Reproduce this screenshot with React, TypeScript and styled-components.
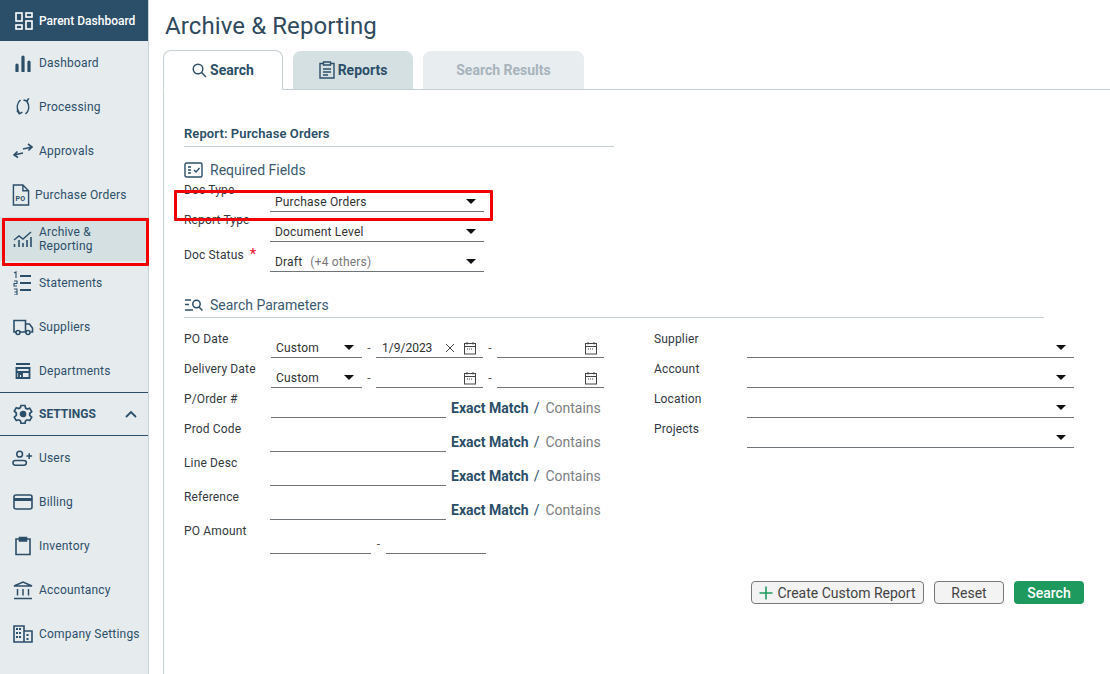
import React from "react"
import styled, { createGlobalStyle } from "styled-components"

const NAVY = "#2c4f69"

const GlobalStyle = createGlobalStyle`
  html, body { margin: 0; padding: 0; background: #fff; }
  body { font-family: Roboto, "Liberation Sans", sans-serif; color: ${NAVY}; overflow: hidden; }
`

const Page = styled.div`
  display: flex;
  width: 1110px;
  height: 674px;
  overflow: hidden;
`

const Sidebar = styled.nav`
  position: relative;
  flex: 0 0 148px;
  box-sizing: content-box;
  background: #e6ebee;
  border-right: 1px solid #c9d2d6;
`

const ParentItem = styled.div`
  display: flex;
  align-items: center;
  height: 41px;
  padding-left: 13px;
  gap: 5px;
  background: ${NAVY};
  color: #fff;
  font-size: 12px;
  font-weight: 500;
`

const NavItem = styled.div<{ $active?: boolean; $tight?: boolean }>`
  display: flex;
  align-items: center;
  height: 44px;
  padding-left: ${(p) => (p.$tight ? 12 : 12)}px;
  gap: ${(p) => (p.$tight ? 5 : 5)}px;
  font-size: 12px;
  letter-spacing: 0.2px;
  line-height: 14px;
  color: ${NAVY};
  background: ${(p) => (p.$active ? "#d5e0e2" : "transparent")};
`

const IconBox = styled.span<{ $w?: number }>`
  display: inline-flex;
  justify-content: center;
  align-items: center;
  flex: 0 0 ${(p) => p.$w ?? 22}px;
  width: ${(p) => p.$w ?? 22}px;
`

const SettingsHeader = styled.div`
  display: flex;
  align-items: center;
  height: 44px;
  box-sizing: border-box;
  margin-top: -1px;
  padding: 0 11px 0 12px;
  gap: 5px;
  border-top: 2px solid ${NAVY};
  border-bottom: 2px solid ${NAVY};
  border-width: 1.5px 0;
  font-size: 12px;
  font-weight: 700;
`

const SettingsLabel = styled.span`
  flex: 1;
`

const Highlight = styled.div`
  position: absolute;
  box-sizing: border-box;
  border: 3px solid #f00000;
  border-radius: 1px;
  pointer-events: none;
`

const SideHighlight = styled(Highlight)`
  left: 2px;
  top: 218px;
  width: 147px;
  height: 48px;
`

const Main = styled.main`
  flex: 1;
  min-width: 0;
  padding-left: 14px;
`

const Title = styled.h1`
  margin: 0;
  height: 50px;
  box-sizing: border-box;
  padding: 11px 0 0 2px;
  font-size: 24px;
  line-height: 30px;
  font-weight: 400;
  color: #2f4a5e;
  letter-spacing: 0.1px;
`

const TabBar = styled.div`
  display: flex;
  align-items: flex-end;
  height: 40px;
  gap: 10px;
  box-sizing: border-box;
  border-bottom: 1px solid #c5d0d5;
`

const Tab = styled.div<{ $kind: "active" | "normal" | "disabled"; $width: number }>`
  display: flex;
  align-items: center;
  justify-content: center;
  gap: 3px;
  box-sizing: border-box;
  width: ${(p) => p.$width}px;
  height: ${(p) => (p.$kind === "active" ? 40 : 38)}px;
  margin-bottom: ${(p) => (p.$kind === "active" ? -1 : 0)}px;
  border-radius: 8px 8px 0 0;
  font-size: 14px;
  font-weight: 700;
  background: ${(p) => (p.$kind === "active" ? "#fff" : p.$kind === "normal" ? "#d5e0e2" : "#e8edf0")};
  color: ${(p) => (p.$kind === "disabled" ? "#a7b3bb" : NAVY)};
  border: ${(p) => (p.$kind === "active" ? "1px solid #c5d0d5" : "none")};
  border-bottom: ${(p) => (p.$kind === "active" ? "1px solid #fff" : "none")};
`

const Panel = styled.section`
  height: 584px;
  box-sizing: border-box;
  border-left: 1px solid #c5d0d5;
  padding: 35px 26px 0 20px;
`

const ReportHeading = styled.h2`
  margin: 0;
  width: 430px;
  height: 22px;
  box-sizing: border-box;
  border-bottom: 1px solid #c5d0d5;
  font-size: 13px;
  line-height: 17px;
  font-weight: 600;
  letter-spacing: 0.1px;
`

const SectionTitle = styled.div<{ $rule?: boolean }>`
  display: flex;
  align-items: center;
  gap: 6px;
  width: 860px;
  height: ${(p) => (p.$rule ? 26 : 24)}px;
  box-sizing: border-box;
  font-size: 14px;
  color: #3b5a72;
  border-bottom: ${(p) => (p.$rule ? "1px solid #c5d0d5" : "none")};
`

const RequiredTitle = styled(SectionTitle)`
  margin-top: 11px;
`

const ParamsTitle = styled(SectionTitle)`
  margin-top: 20px;
`

const Row = styled.div`
  display: flex;
  align-items: flex-end;
  height: 30px;
`

const Label = styled.label<{ $width?: number; $lift?: number }>`
  flex: 0 0 ${(p) => p.$width ?? 86}px;
  width: ${(p) => p.$width ?? 86}px;
  align-self: flex-start;
  padding-top: ${(p) => p.$lift ?? 3}px;
  font-size: 12px;
  line-height: 16px;
  letter-spacing: 0.15px;
  color: #33393f;
`

const Required = styled.span`
  color: #e8112d;
  font-size: 15px;
  margin-left: 6px;
`

const Select = styled.div<{ $width: number }>`
  display: flex;
  align-items: center;
  justify-content: space-between;
  box-sizing: border-box;
  width: ${(p) => p.$width}px;
  height: 20px;
  padding: 0 8px 0 5px;
  border-bottom: 1px solid #6f7478;
  font-size: 12px;
  letter-spacing: 0.2px;
  color: #333;
`

const Muted = styled.span`
  margin-left: 8px;
  color: #777;
`

const Caret = styled.span`
  width: 0;
  height: 0;
  border-left: 5px solid transparent;
  border-right: 5px solid transparent;
  border-top: 5px solid #111;
`

const Dash = styled.span<{ $w?: number }>`
  flex: 0 0 ${(p) => p.$w ?? 14}px;
  width: ${(p) => p.$w ?? 14}px;
  text-align: center;
  font-size: 12px;
  color: #555;
  padding-bottom: 3px;
`

const DateInput = styled.div`
  display: flex;
  align-items: center;
  box-sizing: border-box;
  width: 107px;
  height: 20px;
  padding: 0 6px 0 6px;
  border-bottom: 1px solid #6f7478;
  font-size: 12px;
  color: #333;
`

const DateValue = styled.span`
  flex: 1;
`

const ClearMark = styled.span`
  display: inline-flex;
  margin-right: 8px;
`

const Columns = styled.div`
  display: flex;
  margin-top: 10px;
`

const LeftColumn = styled.div`
  width: 470px;
`

const RightColumn = styled.div``

const TextRow = styled.div`
  display: flex;
  align-items: flex-end;
  height: 34px;
`

const TextInput = styled.div<{ $width: number }>`
  box-sizing: border-box;
  width: ${(p) => p.$width}px;
  height: 20px;
  border-bottom: 1px solid #6f7478;
`

const MatchGroup = styled.div`
  display: flex;
  align-items: center;
  gap: 5px;
  margin-left: 5px;
  height: 20px;
  font-size: 14px;
`

const Exact = styled.span`
  font-weight: 700;
  color: ${NAVY};
`

const Contains = styled.span`
  color: #7b8084;
  margin-left: 1px;
`

const Actions = styled.div`
  display: flex;
  justify-content: flex-end;
  align-items: center;
  gap: 10px;
  margin-top: 27px;
  width: 900px;
`

const Button = styled.button<{ $primary?: boolean; $width: number }>`
  display: flex;
  align-items: center;
  justify-content: center;
  gap: 4px;
  box-sizing: border-box;
  width: ${(p) => p.$width}px;
  height: 23px;
  padding: 0;
  border-radius: 4px;
  font-family: inherit;
  font-size: 14px;
  font-weight: ${(p) => (p.$primary ? 500 : 400)};
  color: ${(p) => (p.$primary ? "#fff" : "#444")};
  background: ${(p) => (p.$primary ? "#1f9a5f" : "#f3f3f3")};
  border: ${(p) => (p.$primary ? "none" : "1px solid #77797b")};
`

const FieldHighlight = styled(Highlight)`
  left: 174px;
  top: 190px;
  width: 319px;
  height: 31px;
`

const Icon: React.FC<{ size?: number; w?: number; h?: number; stroke?: string; sw?: number; children: React.ReactNode }> = ({
  size = 20,
  w,
  h,
  stroke = NAVY,
  sw = 1.6,
  children,
}) => (
  <svg width={w ?? size} height={h ?? size} viewBox={`0 0 ${w ?? size} ${h ?? size}`} fill="none" stroke={stroke} strokeWidth={sw}>
    {children}
  </svg>
)

const icons = {
  parent: (
    <Icon w={18} h={18} stroke="#fff">
      <rect x="1" y="1" width="6" height="8" />
      <rect x="11" y="1" width="6" height="4" />
      <rect x="1" y="13" width="6" height="4" />
      <rect x="11" y="9" width="6" height="8" />
    </Icon>
  ),
  dashboard: (
    <Icon w={18} h={18} sw={3.2}>
      <path d="M3 11v6M9 3v14M15 8v9" strokeLinecap="round" />
    </Icon>
  ),
  processing: (
    <Icon w={18} h={20}>
      <path d="M6.5 3C3 6 2 11 5.2 16" />
      <path d="M3 13.5l2.4 3.2 3-1.6" />
      <path d="M11.5 17C15 14 16 9 12.8 4" />
      <path d="M9.5 3l3.5 1 1.8-2.6" />
    </Icon>
  ),
  approvals: (
    <Icon w={20} h={16}>
      <path d="M1 12l9-2M4.5 8.5L1 12l4 2.5" />
      <path d="M10 6l9-2M15 1l4 3-3.6 3.5" />
    </Icon>
  ),
  po: (
    <Icon w={19} h={24} sw={1.5}>
      <path d="M1.5 1.5h10l6 6v15h-16zM11.5 1.5v6h6" />
      <text x="3.6" y="18" fontSize="7.5" fontWeight="700" fill={NAVY} stroke="none" fontFamily="Roboto">PO</text>
    </Icon>
  ),
  archive: (
    <Icon w={20} h={18} sw={1.4}>
      <path d="M1 10l5-4 4 3 8-7" />
      <path d="M1.5 14v3M6 10v7M10 13v4M14 10v7M18 7v10" strokeWidth="1.6" />
    </Icon>
  ),
  statements: (
    <Icon w={20} h={24}>
      <path d="M7 5h11M7 12h11M7 19h11" strokeWidth="1.8" />
      <path d="M1 2l2-1v6M1 10h3v2.500H1v2.500h3M1 18h3v6H1M1.500 21H4" strokeWidth="1.1" />
    </Icon>
  ),
  suppliers: (
    <Icon w={22} h={18}>
      <path d="M4 14H2V2.500h11.500V14H8M13.500 6h4l3 4v4h-2M13.500 14H14" />
      <circle cx="6" cy="14.500" r="2" />
      <circle cx="16" cy="14.500" r="2" />
    </Icon>
  ),
  departments: (
    <Icon w={18} h={18} sw={1.8}>
      <path d="M2 2h14M1.500 6h15M2.500 6.500v9.500h13V6.500M2 10h14M8 16v-4H5v4" />
    </Icon>
  ),
  gear: (
    <Icon w={20} h={20} sw={1.7}>
      <path d="M8 1.500h4l.6 2.600 1.600.9 2.500-.8 2 3.500-2 1.800v1.800l2 1.800-2 3.500-2.500-.8-1.600.9-.6 2.600H8l-.6-2.600-1.600-.9-2.500.8-2-3.500 2-1.800V9l-2-1.800 2-3.500 2.500.8 1.600-.9z" />
      <circle cx="10" cy="10" r="2.500" fill={NAVY} />
    </Icon>
  ),
  chevron: (
    <Icon w={12} h={8} sw={1.8}>
      <path d="M1 7l5-5 5 5" />
    </Icon>
  ),
  users: (
    <Icon w={23} h={16} sw={1.6}>
      <circle cx="8" cy="4" r="3" />
      <rect x="1" y="10.500" width="14" height="5" rx="2.500" />
      <path d="M15 6h6M18 3v6" />
    </Icon>
  ),
  billing: (
    <Icon w={20} h={16}>
      <rect x="1" y="1" width="18" height="14" rx="2" />
      <path d="M1 5.500h18" strokeWidth="3" />
    </Icon>
  ),
  inventory: (
    <Icon w={18} h={20}>
      <path d="M5 3H2v15.500h14V3h-3" />
      <path d="M5.500 1.500h7v3.500h-7z" fill={NAVY} />
    </Icon>
  ),
  accountancy: (
    <Icon w={20} h={20} sw={1.5}>
      <path d="M1 6l9-4 9 4zM1 18.500h18M4.500 9v6.500M10 9v6.500M15.500 9v6.500" />
    </Icon>
  ),
  company: (
    <Icon w={20} h={18} sw={1.6}>
      <path d="M1 1h10v16H1zM11 6h8v11h-8" />
      <path d="M3 4h6M3 8h6M3 12h6M13.500 10h3M13.500 14h3" strokeDasharray="2 1" strokeWidth="2" />
    </Icon>
  ),
  search: (
    <Icon w={15} h={15} sw={1.4}>
      <circle cx="6" cy="6" r="4.800" />
      <path d="M9.500 9.500l4.500 4.500" />
    </Icon>
  ),
  reports: (
    <Icon w={16} h={18} sw={1.4}>
      <path d="M4.500 2.500h-3.500v14.500h14v-14.500h-3.500" />
      <path d="M4.500 1h7v3h-7zM4 8h8M4 11h8M4 14h5" />
    </Icon>
  ),
  required: (
    <Icon w={20} h={16} sw={1.4}>
      <rect x="1" y="1" width="17" height="14" rx="1.500" />
      <path d="M4 5h3M4 8h3M4 11h3M10 8l2 2 3.500-4" />
    </Icon>
  ),
  params: (
    <Icon w={20} h={14} sw={1.5}>
      <path d="M1 2h6M1 6.500h4M1 12h8" />
      <circle cx="12.500" cy="6" r="3.700" />
      <path d="M15 9l3.500 3.500" />
    </Icon>
  ),
  calendar: (
    <Icon w={14} h={14} stroke="#444" sw={1}>
      <rect x="1.500" y="2.500" width="11" height="10.500" />
      <path d="M1.500 5.500h11M4 1v2.500M10 1v2.500" />
      <path d="M4 8h6" strokeDasharray="1 1" />
    </Icon>
  ),
  close: (
    <Icon w={10} h={10} stroke="#444" sw={1}>
      <path d="M1 1l8 8M9 1l-8 8" />
    </Icon>
  ),
  plus: (
    <Icon w={14} h={14} stroke="#1f9a5f" sw={1.6}>
      <path d="M7 0.500v13M0.500 7h13" />
    </Icon>
  ),
}

type NavEntry = { label: React.ReactNode; icon: React.ReactNode; active?: boolean; tight?: boolean }

const mainNav: NavEntry[] = [
  { label: "Dashboard", icon: icons.dashboard },
  { label: "Processing", icon: icons.processing },
  { label: "Approvals", icon: icons.approvals },
  { label: "Purchase Orders", icon: icons.po, tight: true },
  { label: <>Archive &<br />Reporting</>, icon: icons.archive, active: true },
  { label: "Statements", icon: icons.statements },
  { label: "Suppliers", icon: icons.suppliers },
  { label: "Departments", icon: icons.departments },
]

const settingsNav: NavEntry[] = [
  { label: "Users", icon: icons.users },
  { label: "Billing", icon: icons.billing },
  { label: "Inventory", icon: icons.inventory },
  { label: "Accountancy", icon: icons.accountancy },
  { label: "Company Settings", icon: icons.company },
]

const NavList: React.FC<{ items: NavEntry[] }> = ({ items }) => (
  <>
    {items.map((item, i) => (
      <NavItem key={i} $active={item.active} $tight={item.tight}>
        <IconBox $w={item.tight ? 18 : 22}>{item.icon}</IconBox>
        <span>{item.label}</span>
      </NavItem>
    ))}
  </>
)

const SelectField: React.FC<{ width: number; value?: string; extra?: string }> = ({ width, value, extra }) => (
  <Select $width={width}>
    <span>
      {value}
      {extra && <Muted>{extra}</Muted>}
    </span>
    <Caret />
  </Select>
)

const DateField: React.FC<{ value?: string }> = ({ value }) => (
  <DateInput>
    <DateValue>{value}</DateValue>
    {value && <ClearMark>{icons.close}</ClearMark>}
    {icons.calendar}
  </DateInput>
)

const MatchRow: React.FC<{ label: string }> = ({ label }) => (
  <TextRow>
    <Label $width={86} $lift={3}>{label}</Label>
    <TextInput $width={176} />
    <MatchGroup>
      <Exact>Exact Match</Exact>
      <span>/</span>
      <Contains>Contains</Contains>
    </MatchGroup>
  </TextRow>
)

const App: React.FC = () => (
  <Page>
    <GlobalStyle />
    <Sidebar>
      <ParentItem>
        <IconBox $w={21}>{icons.parent}</IconBox>
        <span>Parent Dashboard</span>
      </ParentItem>
      <NavList items={mainNav.slice(0, 8)} />
      <SettingsHeader>
        <IconBox>{icons.gear}</IconBox>
        <SettingsLabel>SETTINGS</SettingsLabel>
        {icons.chevron}
      </SettingsHeader>
      <NavList items={settingsNav} />
      <SideHighlight />
    </Sidebar>
    <Main>
      <Title>Archive &amp; Reporting</Title>
      <TabBar>
        <Tab $kind="active" $width={120}>{icons.search}Search</Tab>
        <Tab $kind="normal" $width={120}>{icons.reports}Reports</Tab>
        <Tab $kind="disabled" $width={161}>Search Results</Tab>
      </TabBar>
      <Panel>
        <ReportHeading>Report: Purchase Orders</ReportHeading>
        <RequiredTitle>{icons.required}Required Fields</RequiredTitle>
        <Row>
          <Label $lift={0}>Doc Type</Label>
          <SelectField width={214} value="Purchase Orders" />
        </Row>
        <Row>
          <Label $lift={0}>Report Type</Label>
          <SelectField width={214} value="Document Level" />
        </Row>
        <Row>
          <Label $lift={4}>Doc Status<Required>*</Required></Label>
          <SelectField width={214} value="Draft" extra="(+4 others)" />
        </Row>
        <ParamsTitle $rule>{icons.params}Search Parameters</ParamsTitle>
        <Columns>
          <LeftColumn>
            <Row>
              <Label $width={87}>PO Date</Label>
              <SelectField width={91} value="Custom" />
              <Dash>-</Dash>
              <DateField value="1/9/2023" />
              <Dash>-</Dash>
              <DateField />
            </Row>
            <Row>
              <Label $width={87}>Delivery Date</Label>
              <SelectField width={91} value="Custom" />
              <Dash>-</Dash>
              <DateField />
              <Dash>-</Dash>
              <DateField />
            </Row>
            <TextRow style={{ height: 30 }}>
              <Label $width={87}>P/Order #</Label>
              <TextInput $width={175} />
              <MatchGroup>
                <Exact>Exact Match</Exact>
                <span>/</span>
                <Contains>Contains</Contains>
              </MatchGroup>
            </TextRow>
            <MatchRow label="Prod Code" />
            <MatchRow label="Line Desc" />
            <MatchRow label="Reference" />
            <TextRow>
              <Label $width={86}>PO Amount</Label>
              <TextInput $width={101} />
              <Dash $w={15}>-</Dash>
              <TextInput $width={100} />
            </TextRow>
          </LeftColumn>
          <RightColumn>
            {["Supplier", "Account", "Location", "Projects"].map((name) => (
              <Row key={name}>
                <Label $width={93}>{name}</Label>
                <SelectField width={327} />
              </Row>
            ))}
          </RightColumn>
        </Columns>
        <Actions>
          <Button $width={173}>{icons.plus}Create Custom Report</Button>
          <Button $width={70}>Reset</Button>
          <Button $primary $width={70}>Search</Button>
        </Actions>
      </Panel>
    </Main>
    <FieldHighlight />
  </Page>
)

export default App
